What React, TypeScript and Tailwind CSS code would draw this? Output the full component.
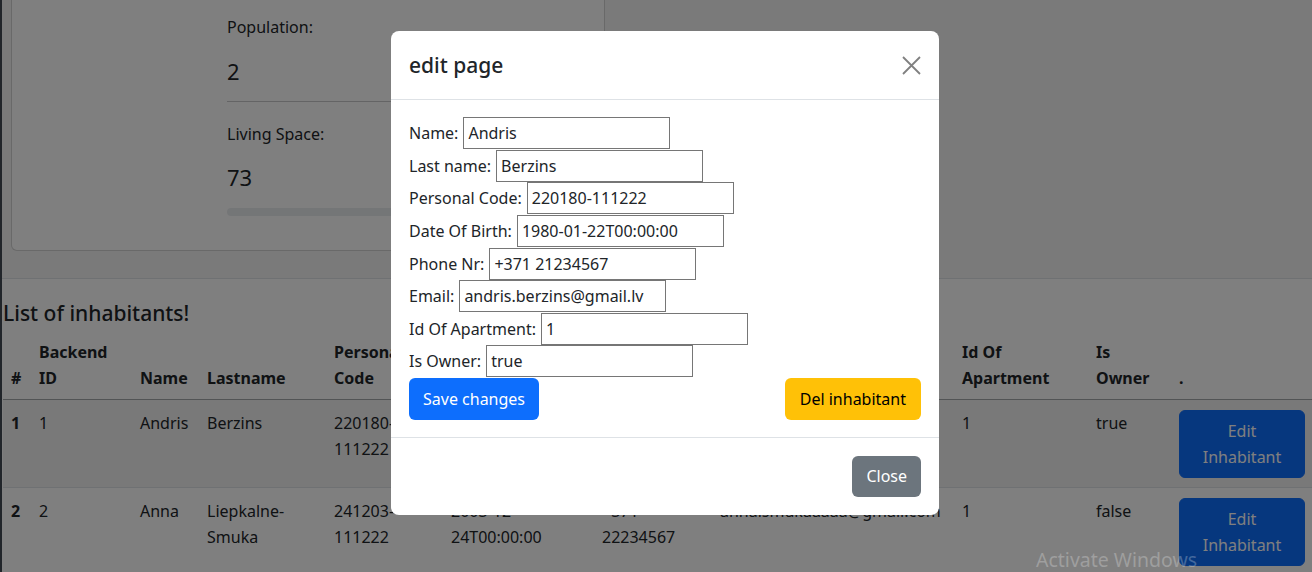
import React from 'react';

const rows = [
  {
    n: 1,
    id: 1,
    name: 'Andris',
    last: 'Berzins',
    code: '220180-111222',
    dob: '1980-01-22T00:00:00',
    phone: '+371 21234567',
    email: 'andris.berzins@gmail.lv',
    apt: 1,
    owner: 'true',
  },
  {
    n: 2,
    id: 2,
    name: 'Anna',
    last: 'Liepkalne-Smuka',
    code: '241203-111222',
    dob: '2003-12-24T00:00:00',
    phone: '+371 22234567',
    email: 'annaismukaaaaa@gmail.com',
    apt: 1,
    owner: 'false',
  },
];

const fields = [
  { label: 'Name:', value: 'Andris' },
  { label: 'Last name:', value: 'Berzins' },
  { label: 'Personal Code:', value: '220180-111222' },
  { label: 'Date Of Birth:', value: '1980-01-22T00:00:00' },
  { label: 'Phone Nr:', value: '+371 21234567' },
  { label: 'Email:', value: 'andris.berzins@gmail.lv' },
  { label: 'Id Of Apartment:', value: '1' },
  { label: 'Is Owner:', value: 'true' },
];

const EditModal: React.FC = () => {
  return (
    <div className="absolute left-[391px] top-[31px] w-[548px] bg-white rounded-[8px] text-[#212529]">
      <div className="h-[69px] px-[18px] flex items-center justify-between border-b border-[#dee2e6]">
        <h5 className="text-[21px] font-medium leading-[26px]">edit page</h5>
        <button className="w-[19px] h-[19px] text-[#808080]">
          <svg viewBox="0 0 19 19" width="19" height="19" fill="none" stroke="currentColor" strokeWidth="1.8">
            <path d="M1 1L18 18M18 1L1 18" />
          </svg>
        </button>
      </div>
      <div className="px-[18px] pt-[17px] pb-[17px]">
        {fields.map((f) => (
          <div key={f.label} className="flex items-center h-[32.6px]">
            <span>{f.label}</span>
            <input
              readOnly
              value={f.value}
              className="ml-[5px] w-[207px] h-[32px] border border-[#767676] px-[4px] text-[16px] outline-none"
            />
          </div>
        ))}
        <div className="flex justify-between">
          <button className="h-[42px] px-[14px] rounded-[6px] bg-[#0d6efd] text-white">Save changes</button>
          <button className="h-[42px] px-[15px] rounded-[6px] bg-[#ffc107] text-black">Del inhabitant</button>
        </div>
      </div>
      <div className="border-t border-[#dee2e6] px-[18px] py-[18px] flex justify-end">
        <button className="h-[41px] px-[14px] rounded-[6px] bg-[#6c757d] text-white">Close</button>
      </div>
    </div>
  );
};

export default function App() {
  return (
    <div className="relative w-[1312px] h-[572px] overflow-hidden flex bg-white text-[16px] leading-[26px] text-[#212529] font-['Noto_Sans',sans-serif]">
      <div className="w-[2px] shrink-0 bg-[#434a54]" />
      <div className="flex-1 flex flex-col min-w-0">
        {/* apartment info */}
        <div className="h-[279px] shrink-0 bg-[#f5f5f5] border-b border-[#dee2e6]">
          <div className="ml-[9px] mt-[-10px] w-[594px] h-[261px] bg-white border border-black/[.175] rounded-[6px] pt-[23px] pl-[215px] pr-[16px] flex flex-col">
            <div>Population:</div>
            <div className="mt-[15px] text-[22px] leading-[33px]">2</div>
            <div className="mt-[13px] border-t border-[#c8c9ca]" />
            <div className="mt-[19px]">Living Space:</div>
            <div className="mt-[14px] text-[22px] leading-[33px]">73</div>
            <div className="mt-[14px] h-[8px] rounded-full bg-[#e9ecef]" />
          </div>
        </div>

        {/* inhabitants list */}
        <div className="flex-1 bg-white">
          <h5 className="pt-[21px] ml-[1px] text-[21px] font-medium leading-[26px]">List of inhabitants!</h5>
          <table className="mt-[9px] ml-[1px] table-fixed w-[1310px] border-collapse text-left">
            <thead>
              <tr className="border-b border-[#a5a8ab] align-bottom font-bold">
                <th className="w-[28px] px-[8px] pt-[4px] pb-[8px]">#</th>
                <th className="w-[101px] px-[8px] pt-[4px] pb-[8px]">Backend ID</th>
                <th className="w-[67px] px-[8px] pt-[4px] pb-[8px]">Name</th>
                <th className="w-[127px] px-[8px] pt-[4px] pb-[8px]">Lastname</th>
                <th className="w-[117px] px-[8px] pt-[4px] pb-[8px]">Personal Code</th>
                <th className="w-[151px] px-[8px] pt-[4px] pb-[8px]">Date Of Birth</th>
                <th className="w-[118px] px-[8px] pt-[4px] pb-[8px]">Phone Nr</th>
                <th className="w-[242px] px-[8px] pt-[4px] pb-[8px]">Email</th>
                <th className="w-[134px] px-[8px] pt-[4px] pb-[8px]">Id Of Apartment</th>
                <th className="w-[83px] px-[8px] pt-[4px] pb-[8px]">Is Owner</th>
                <th className="w-[142px] px-[8px] pt-[4px] pb-[8px]">.</th>
              </tr>
            </thead>
            <tbody>
              {rows.map((r) => (
                <tr key={r.n} className={`border-b border-[#dee2e6] align-top ${r.n % 2 === 1 ? 'bg-[#f2f2f2]' : ''}`}>
                  <td className="px-[8px] pt-[10px] pb-[9px] font-bold">{r.n}</td>
                  <td className="px-[8px] pt-[10px] pb-[9px]">{r.id}</td>
                  <td className="px-[8px] pt-[10px] pb-[9px]">{r.name}</td>
                  <td className="px-[8px] pt-[10px] pb-[9px]">{r.last}</td>
                  <td className="px-[8px] pt-[10px] pb-[9px]">{r.code}</td>
                  <td className="px-[8px] pt-[10px] pb-[9px]">{r.dob}</td>
                  <td className="px-[8px] pt-[10px] pb-[9px]">{r.phone}</td>
                  <td className="px-[8px] pt-[10px] pb-[9px] whitespace-nowrap">{r.email}</td>
                  <td className="px-[8px] pt-[10px] pb-[9px]">{r.apt}</td>
                  <td className="px-[8px] pt-[10px] pb-[9px]">{r.owner}</td>
                  <td className="px-[8px] pt-[10px] pb-[9px]">
                    <button className="w-[126px] px-[13px] py-[7px] rounded-[6px] bg-[#0d6efd] border border-[#0d6efd] text-white">
                      Edit Inhabitant
                    </button>
                  </td>
                </tr>
              ))}
            </tbody>
          </table>
        </div>
      </div>

      {/* modal backdrop */}
      <div className="absolute inset-0 bg-black/50" />
      <EditModal />

      <div className="absolute left-[1036px] top-[546px] text-[19.5px] leading-[28px] text-white/25">Activate Windows</div>
    </div>
  );
}
